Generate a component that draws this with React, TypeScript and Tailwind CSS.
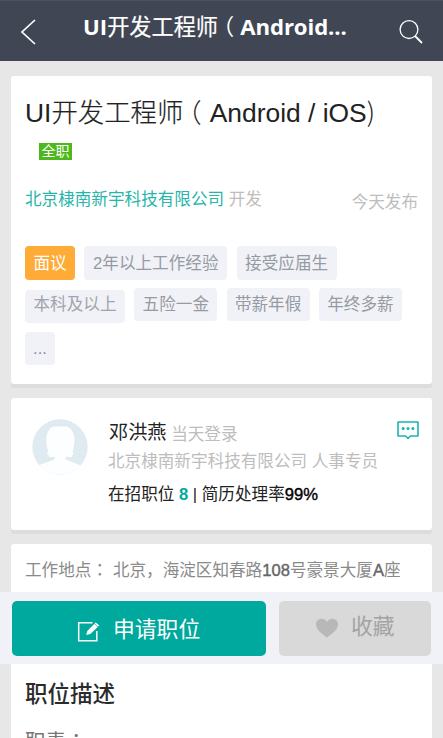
import React from 'react';

const tagRows = [
    [
        { label: '面议', style: 'w-[50px] h-[34px] bg-[#ffab37] text-white leading-[35px]' },
        { label: '2年以上工作经验', style: 'w-[143px] h-[34px] bg-[#f1f2f7] text-[#959aa3] leading-[35px]' },
        { label: '接受应届生', style: 'w-[100px] h-[34px] bg-[#f1f2f7] text-[#959aa3] leading-[35px]' },
    ],
    [
        { label: '本科及以上', style: 'w-[100px] h-[33px] mt-0.5 bg-[#f1f2f7] text-[#a0a4ac] leading-[30px]' },
        { label: '五险一金', style: 'w-[83px] h-[33px] bg-[#f1f2f7] text-[#959aa3] leading-[33px]' },
        { label: '带薪年假', style: 'w-[83px] h-[33px] bg-[#f1f2f7] text-[#959aa3] leading-[33px]' },
        { label: '年终多薪', style: 'w-[83px] h-[33px] bg-[#f1f2f7] text-[#959aa3] leading-[33px]' },
    ],
    [{ label: '...', style: 'w-[30px] h-[33px] mt-0.5 bg-[#f1f2f7] text-[#8a8f99] leading-[33px]' }],
];

const Header = () => (
    <header className="h-[61px] bg-[#404653] border-t border-[#4b515d] flex items-start text-white">
        <svg className="ml-5 mt-[17px] shrink-0" width="17" height="28" viewBox="0 0 17 28" fill="none" stroke="currentColor" strokeWidth="1.7">
            <path d="M15 2L2 14L15 26" />
        </svg>
        <h1 className="ml-[46px] w-[268px] whitespace-nowrap text-[22.2px] leading-[51px] font-['Open_Sans','Noto_Sans_CJK_SC',sans-serif]">
            <span className="font-bold">UI</span>
            <span className="font-normal [-webkit-text-stroke:0.2px_white]">开发工程师</span>
            <span className="relative -left-[6px]">（</span>
            <span className="font-bold tracking-[-0.1px]">Android...</span>
        </h1>
        <svg className="ml-12 mt-[19px] shrink-0" width="25" height="25" viewBox="0 0 25 25" fill="none" stroke="currentColor" strokeWidth="1.3">
            <circle cx="10" cy="9.6" r="8.9" />
            <path d="M16 16L23 23" strokeWidth="1.8" />
        </svg>
    </header>
);

const JobCard = () => (
    <section className="h-[308px] bg-white rounded-[3px] shadow-[0_4px_0_#dddddd] px-3.5 pt-[15px]">
        <h2 className="h-10 leading-[40px] whitespace-nowrap text-[26.4px] text-[#222]">
            UI<span className="font-light [-webkit-text-stroke:0.2px_#222]">开发工程师</span>
            <span className="relative -left-2 font-light">（</span>
            <span>Android / iOS</span>
            <span className="font-light font-['Noto_Sans_CJK_SC',sans-serif]">)</span>
        </h2>
        <div className="ml-3.5 mt-3 w-[33px] h-[17px] leading-[17px] bg-[#4cb81b] text-white text-[14px] text-center">全职</div>
        <div className="mt-[25px] flex justify-between text-[16.6px] leading-[30px] text-[#bdbdbd]">
            <p className="whitespace-nowrap">
                <span className="text-[#27b5ab]">北京棣南新宇科技有限公司</span> 开发
            </p>
            <p className="mt-[3px]">今天发布</p>
        </div>
        <div className="mt-[28px] flex flex-col">
            {tagRows.map((row, i) => (
                <div key={i} className="flex items-start gap-[9.3px] h-[42px]">
                    {row.map((tag) => (
                        <span key={tag.label} className={`rounded-[4px] text-[16.6px] text-center whitespace-nowrap shrink-0 ${tag.style}`}>
                            {tag.label}
                        </span>
                    ))}
                </div>
            ))}
        </div>
    </section>
);

const Avatar = () => (
    <svg width="56" height="56" viewBox="0 0 56 56">
        <defs>
            <clipPath id="avatar">
                <circle cx="28" cy="28" r="27.7" />
            </clipPath>
        </defs>
        <g clipPath="url(#avatar)">
            <rect width="56" height="56" fill="#dfeaf1" />
            <path
                d="M0 48L7 45.700L20 41C22 40.200 23 39.500 22 38C19 39 16.500 38.500 16 37.500L17 36.800C15.500 36.500 14.500 36 14.500 35C17 33 14 29 14 24C13 15 17 7 23 7H33C40 7 43.500 15 42.700 24C42.500 29 40 33 42 35C42 36 41 36.500 40 36.800L41 37.500C40 38.500 37 39 34 38C33 39.500 34 40.200 36 41L48 45.700L56 48V56H0Z"
                fill="#fcfeff"
                stroke="#d2e0e9"
                strokeWidth="0.4"
            />
        </g>
    </svg>
);

const RecruiterCard = () => (
    <section className="mt-[14px] h-[132px] bg-white rounded-[3px] shadow-[0_4px_0_#dddddd] flex items-start">
        <div className="ml-[21px] mt-[21px] shrink-0">
            <Avatar />
        </div>
        <div className="ml-5 mt-5 flex-1 whitespace-nowrap text-[16.6px] text-[#bdbdbd]">
            <p className="pl-px leading-[30px]">
                <span className="text-[19.2px] text-[#222]">邓洪燕</span> <span className="relative top-px">当天登录</span>
            </p>
            <p className="leading-[26px]">北京棣南新宇科技有限公司 人事专员</p>
            <p className="mt-[5px] leading-[30px] text-[16.6px] text-[#222]">
                在招职位 <span className="font-bold text-[#00a99d]">8</span> | 简历处理率
                <span className="text-black [-webkit-text-stroke:0.4px_black]">99%</span>
            </p>
        </div>
        <svg className="mr-[13px] mt-[22px] shrink-0" width="22" height="20" viewBox="0 0 22 20" fill="none" stroke="#1bb5b2" strokeWidth="1.6">
            <path d="M1 2H21V16H13.500L11 18.300L8.500 16H1Z" strokeLinejoin="round" />
            <g fill="#1bb5b2" stroke="none">
                <circle cx="6.200" cy="8.600" r="1.500" />
                <circle cx="11" cy="8.600" r="1.500" />
                <circle cx="15.900" cy="8.600" r="1.500" />
            </g>
        </svg>
    </section>
);

const DetailCard = () => (
    <section className="mt-[14px] h-[194px] bg-white rounded-t-[3px] pl-3.5 overflow-hidden whitespace-nowrap">
        <p className="pt-3 leading-[30px] text-[16.6px] text-[#8a8a8a]">
            工作地点<span className="inline-block w-[21.5px] font-['Noto_Sans_CJK_TC',sans-serif] leading-none">：</span>北京，海淀区知春路
            <span className="text-[#666] [-webkit-text-stroke:0.4px_#666]">108</span>号豪景大厦
            <span className="text-[#666] [-webkit-text-stroke:0.4px_#666]">A</span>座
        </p>
        <h3 className="mt-[94px] leading-[30px] text-[22.5px] text-[#2b2b2b] font-medium">职位描述</h3>
        <p className="mt-[17px] leading-[30px] text-[20.5px] text-[#777]">
            职责<span className="font-['Noto_Sans_CJK_TC',sans-serif] leading-none">：</span>
        </p>
    </section>
);

const ActionBar = () => (
    <div className="absolute left-0 top-[592px] w-full h-[72px] bg-[#f1f2f7] px-3 pt-[9px] flex items-start gap-[13px]">
        <button className="w-[254px] h-[55px] rounded-[5px] bg-[#00a99d] text-white flex items-center">
            <svg className="ml-[65px] mt-[6px]" width="23" height="23" viewBox="0 0 23 23" fill="none" stroke="currentColor" strokeWidth="1.5">
                <path d="M15.500 2.700H1.700V20.700H19.800V11" />
                <path d="M9.200 15L10.300 11L18.700 2.500L22.300 5.600L13.300 14Z" fill="currentColor" stroke="none" />
                <path d="M17 3.300L21 7.100" stroke="#00a99d" strokeWidth="0.7" />
            </svg>
            <span className="ml-[13px] mt-[3px] text-[21.8px] leading-[30px]">申请职位</span>
        </button>
        <button className="w-[152px] h-[55px] rounded-[5px] bg-[#d9d9d9] text-[#a3a3a3] flex items-center">
            <svg className="ml-[36px] -mt-0.5" width="24" height="20" viewBox="0 0 24 20" fill="#b8b8b8">
                <path d="M12 19.500C8 16.500 1 12 1 6.500C1 3 3.500 0.800 6.500 0.800C9 0.800 11 2 12 4C13 2 15 0.800 17.500 0.800C20.500 0.800 23 3 23 6.500C23 12 16 16.500 12 19.500Z" />
            </svg>
            <span className="ml-3 -mt-1 text-[21.8px] leading-[30px]">收藏</span>
        </button>
    </div>
);

const App = () => {
    return (
        <div className="relative w-[443px] h-[738px] overflow-hidden bg-[#e7e7e7] font-['Liberation_Sans','Noto_Sans_CJK_SC',sans-serif]">
            <Header />
            <main className="px-[11px] pt-[15px]">
                <JobCard />
                <RecruiterCard />
                <DetailCard />
            </main>
            <ActionBar />
        </div>
    );
};

export default App;
